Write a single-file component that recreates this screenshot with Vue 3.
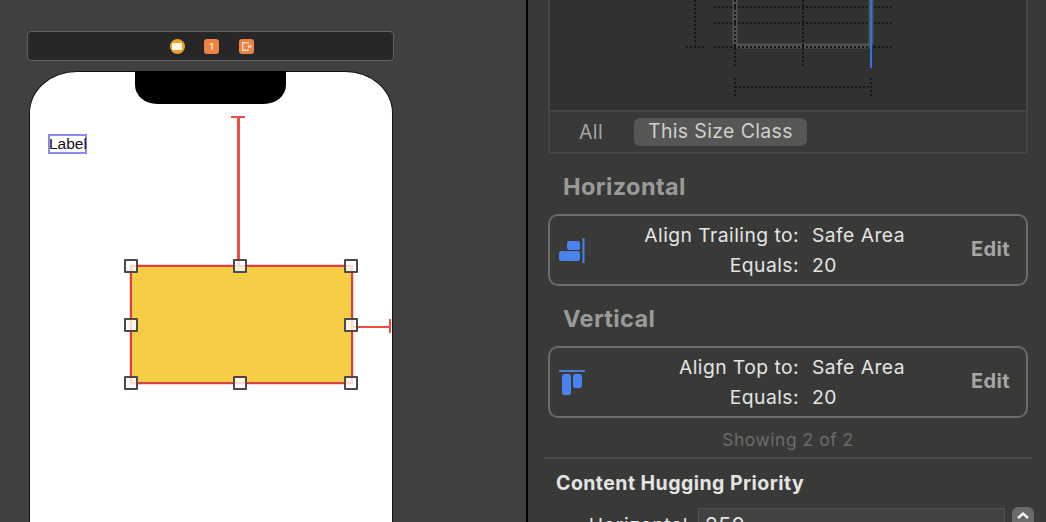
<script setup>
const handles = [
  { x: -1, y: -1 }, { x: 108, y: -1 }, { x: 219, y: -1 },
  { x: -1, y: 58 }, { x: 219, y: 58 },
  { x: -1, y: 116 }, { x: 108, y: 116 }, { x: 219, y: 116 }
]

const constraints = [
  { id: 'h', title: 'Horizontal', relation: 'Align Trailing to:', target: 'Safe Area', value: '20' },
  { id: 'v', title: 'Vertical', relation: 'Align Top to:', target: 'Safe Area', value: '20' }
]
</script>

<template>
  <div class="screen">
    <section class="canvas">
      <div class="scene-bar">
        <span class="scene-vc"><i></i></span>
        <span class="scene-badge">1</span>
        <span class="scene-badge">
          <svg width="13" height="13" viewBox="0 0 13 13" fill="none">
            <path d="M8 4V2.700H2.700v7.600H8V9" stroke="#fbe3d3" stroke-width="1.300" />
            <path d="M8 6.500h3.500" stroke="#fbe3d3" stroke-width="2.200" />
          </svg>
        </span>
      </div>

      <div class="phone">
        <div class="notch"></div>
        <span class="label">Label</span>
        <div class="pin-top"></div>
        <div class="pin-right"></div>
        <div class="view">
          <span
            v-for="(h, i) in handles"
            :key="i"
            class="handle"
            :style="{ left: h.x + 'px', top: h.y + 'px' }"
          ></span>
        </div>
      </div>
    </section>

    <aside class="inspector">
      <div class="editor">
        <svg class="diagram" width="476" height="110" viewBox="0 0 476 110">
          <rect x="185" y="-20" width="136" height="66" rx="4" fill="none" stroke="#525251" stroke-width="5" />
          <g stroke="#161616" stroke-width="2" stroke-dasharray="2 2" fill="none">
            <path d="M164 7H342M164 23H342M164 47H342M136 47H154" />
            <path d="M145 0V45M185 0V68M253 0V68" />
            <path d="M185 87H321M185 78V96M321 78V96" />
          </g>
          <path d="M321 0V68" stroke="#2f73ea" stroke-width="2" />
        </svg>
        <div class="tabs">
          <span class="tab">All</span>
          <span class="tab active">This Size Class</span>
        </div>
      </div>

      <template v-for="c in constraints" :key="c.id">
        <h3 class="group-title">{{ c.title }}</h3>
        <div class="card">
          <svg v-if="c.id === 'h'" class="card-icon" width="26" height="26" viewBox="0 0 26 26">
            <rect x="8" y="4" width="13" height="9" rx="2.500" fill="#4a83ee" />
            <rect x="0" y="14" width="21" height="10" rx="2.500" fill="#4a83ee" />
            <rect x="23.500" y="1" width="2" height="25" fill="#4a83ee" />
          </svg>
          <svg v-else class="card-icon" width="26" height="26" viewBox="0 0 26 26">
            <rect x="0" y="1" width="26" height="2" fill="#4f7fd5" />
            <rect x="3" y="5" width="9" height="21" rx="2.500" fill="#4a83ee" />
            <rect x="14" y="5" width="9" height="14" rx="2.500" fill="#4a83ee" />
          </svg>
          <dl class="card-text">
            <dt>{{ c.relation }}</dt>
            <dd>{{ c.target }}</dd>
            <dt>Equals:</dt>
            <dd>{{ c.value }}</dd>
          </dl>
          <span class="edit">Edit</span>
        </div>
      </template>

      <p class="showing">Showing 2 of 2</p>
      <div class="rule"></div>
      <h4 class="hugging">Content Hugging Priority</h4>
      <div class="priority">
        <span class="priority-label">Horizontal</span>
        <span class="priority-input">250</span>
        <span class="stepper">
          <svg width="14" height="9" viewBox="0 0 14 9" fill="none">
            <path d="M2 7l5-4.500L12 7" stroke="#f2f2f2" stroke-width="2.400" />
          </svg>
        </span>
      </div>
    </aside>
  </div>
</template>

<style>
html,
body {
  margin: 0;
  background: #393938;
  overflow: hidden;
}
</style>

<style scoped>
.screen {
  display: grid;
  grid-template-columns: 526px 2px 1fr;
  width: 1046px;
  height: 522px;
  overflow: hidden;
  background: #000;
  font-family: Inter, "Liberation Sans", sans-serif;
}

.canvas {
  position: relative;
  grid-column: 1;
  background: #404040;
  overflow: hidden;
}

.scene-bar {
  position: absolute;
  left: 27px;
  top: 31px;
  width: 367px;
  height: 30px;
  box-sizing: border-box;
  padding-left: 2px;
  display: flex;
  align-items: center;
  justify-content: center;
  gap: 19.500px;
  background: #272727;
  border: 1px solid #626262;
  border-radius: 4px;
}

.scene-vc {
  width: 15px;
  height: 15px;
  border-radius: 50%;
  background: #e7a52d;
  display: flex;
  align-items: center;
  justify-content: center;
}

.scene-vc i {
  display: block;
  width: 10px;
  height: 7px;
  border-radius: 1px;
  background: #fff6e0;
}

.scene-badge {
  width: 15px;
  height: 15px;
  border-radius: 3px;
  background: #ec8443;
  color: #fbe3d3;
  font-size: 9px;
  font-weight: 600;
  display: flex;
  align-items: center;
  justify-content: center;
}

.phone {
  position: absolute;
  left: 29px;
  top: 71px;
  width: 363.500px;
  height: 500px;
  box-sizing: border-box;
  background: #fff;
  border: 1px solid #111;
  border-radius: 48px 48px 0 0 / 42px 42px 0 0;
}

.notch {
  position: absolute;
  left: 105px;
  top: -1px;
  width: 151px;
  height: 33px;
  background: #000;
  border-radius: 0 0 22px 22px / 0 0 19px 19px;
}

.label {
  position: absolute;
  left: 18px;
  top: 62px;
  width: 39px;
  height: 20px;
  box-sizing: border-box;
  padding-left: 1px;
  box-shadow: inset 0 0 0 2px #8a8af5;
  color: #111;
  font-family: "Liberation Sans", Arial, sans-serif;
  font-size: 15.500px;
  line-height: 20px;
  white-space: nowrap;
}

.pin-top {
  position: absolute;
  left: 207px;
  top: 44px;
  width: 2.500px;
  height: 150px;
  background: #ee4b43;
}

.pin-top::before {
  content: "";
  position: absolute;
  left: -6px;
  top: 0;
  width: 14px;
  height: 2px;
  background: #ee4b43;
}

.pin-right {
  position: absolute;
  left: 322px;
  top: 254px;
  width: 39px;
  height: 2px;
  background: #ee4b43;
}

.pin-right::after {
  content: "";
  position: absolute;
  right: 0;
  top: -7px;
  width: 2.500px;
  height: 14px;
  background: #ee4b43;
}

.view {
  position: absolute;
  left: 100px;
  top: 193px;
  width: 223px;
  height: 119px;
  box-sizing: border-box;
  background: #f7cd45;
  border: 2px solid #dc3f3f;
  box-shadow: 0 0 0 1px rgba(220, 63, 63, 0.25);
}

.handle {
  position: absolute;
  width: 14px;
  height: 14px;
  box-sizing: border-box;
  margin: -7px 0 0 -7px;
  background: rgba(255, 255, 255, 0.8);
  border: 2.500px solid #4a4a4a;
  border-radius: 1px;
}

.inspector {
  grid-column: 3;
  min-width: 0;
  background: #393938;
  padding: 0 0 0 16px;
  color: #e4e4e3;
  overflow: hidden;
}

.editor {
  width: 480px;
  height: 154px;
  margin-left: 4px;
  box-sizing: border-box;
  border: 2px solid #464646;
  border-top: 0;
  background: #393938;
  display: flex;
  flex-direction: column;
}

.diagram {
  display: block;
  flex: none;
  height: 110px;
  background: #313130;
}

.tabs {
  flex: 1;
  border-top: 2px solid #464646;
  display: flex;
  align-items: center;
  gap: 31px;
  padding: 0 0 1px 29px;
  font-size: 19.500px;
  letter-spacing: 0.35px;
  color: #a5a5a4;
}

.tab.active {
  background: #565655;
  color: #cfcfce;
  border-radius: 6px;
  padding: 0 14px;
  height: 28px;
  line-height: 27px;
}

.group-title {
  margin: 19px 0 0 19px;
  font-size: 23.500px;
  letter-spacing: 0.4px;
  line-height: 28px;
  height: 28px;
  font-weight: 700;
  color: #9a9a99;
}

.card {
  position: relative;
  width: 480px;
  height: 72px;
  margin: 13px 0 0 4px;
  box-sizing: border-box;
  border: 2px solid #6b6b6a;
  border-radius: 10px;
}

.card-icon {
  position: absolute;
  left: 9px;
  top: 21px;
}

.card-text {
  position: absolute;
  inset: 0;
  margin: 0;
  display: grid;
  grid-template-columns: 249px 1fr;
  column-gap: 13px;
  align-content: center;
  font-size: 19.300px;
  letter-spacing: 0.45px;
  line-height: 30px;
}

.card-text dt {
  text-align: right;
}

.card-text dd {
  margin: 0;
}

.edit {
  position: absolute;
  right: 16px;
  top: 19px;
  font-size: 20px;
  letter-spacing: 0.4px;
  line-height: 28px;
  font-weight: 700;
  color: #a5a5a4;
}

.showing {
  margin: 10px 0 0;
  width: 488px;
  text-align: center;
  font-size: 17.500px;
  letter-spacing: 0.5px;
  line-height: 24px;
  color: #6c6c6b;
}

.rule {
  width: 488px;
  height: 2px;
  margin-top: 5px;
  background: #4c4c4b;
}

.hugging {
  margin: 12px 0 0 12px;
  font-size: 19.500px;
  letter-spacing: 0.45px;
  line-height: 24px;
  font-weight: 700;
  color: #e4e4e3;
}

.priority {
  display: flex;
  align-items: flex-start;
  margin-top: 13px;
  height: 40px;
}

.priority-label {
  width: 144px;
  padding-top: 5px;
  text-align: right;
  font-size: 19.300px;
  letter-spacing: 0.6px;
  line-height: 24px;
}

.priority-input {
  width: 307px;
  height: 40px;
  margin-left: 10px;
  box-sizing: border-box;
  padding: 5px 0 0 6px;
  background: #424241;
  border: 1px solid #515150;
  font-size: 21px;
  letter-spacing: 0.5px;
  line-height: 24px;
}

.stepper {
  width: 22px;
  height: 30px;
  margin: -1px 0 0 7px;
  padding-top: 4px;
  box-sizing: border-box;
  display: flex;
  justify-content: center;
  background: #6a6a69;
  border-radius: 6px;
}

.stepper svg {
  display: block;
}
</style>
